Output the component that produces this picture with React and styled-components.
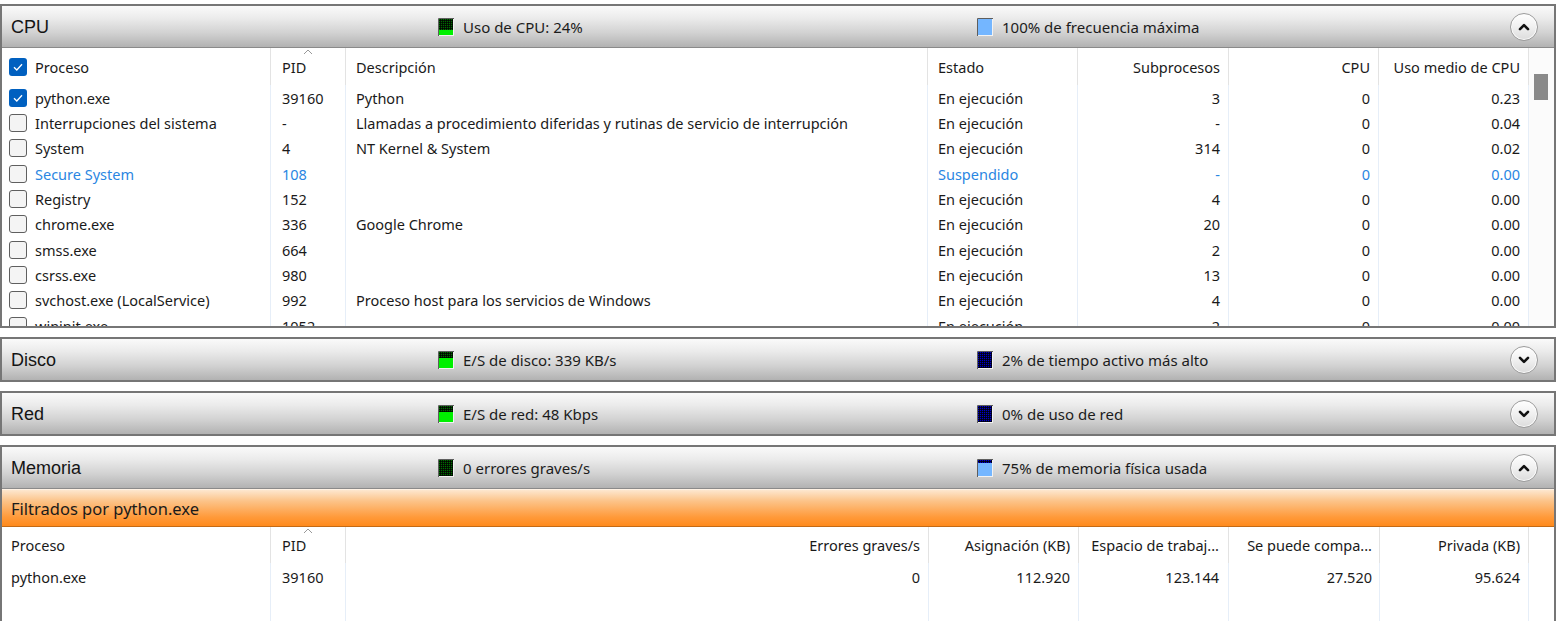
import React, { useId } from "react";
import styled, { createGlobalStyle } from "styled-components";

const GlobalStyle = createGlobalStyle`
  html, body {
    margin: 0;
    padding: 0;
    background: #fff;
    overflow: hidden;
  }
  body {
    font-family: "Noto Sans", "Open Sans", sans-serif;
    color: #1a1a1a;
  }
`;

// column layouts (px) - last one fills the rest (scrollbar / empty)
const CPU_COLS = [
  { key: "name", w: 269, pad: "0 0 0 7px" },
  { key: "pid", w: 75, pad: "0 0 0 11px", sort: true },
  { key: "desc", w: 582, pad: "0 0 0 10px" },
  { key: "state", w: 150, pad: "0 0 0 10px" },
  { key: "threads", w: 151, pad: "0 8px 0 0", right: true },
  { key: "cpu", w: 150, pad: "0 8px 0 0", right: true },
  { key: "avg", w: 150, pad: "0 8px 0 0", right: true },
];

const MEM_COLS = [
  { key: "name", w: 269, pad: "0 0 0 9px" },
  { key: "pid", w: 75, pad: "0 0 0 11px", sort: true },
  { key: "faults", w: 583, pad: "0 8px 0 0", right: true },
  { key: "commit", w: 150, pad: "0 8px 0 0", right: true },
  { key: "ws", w: 150, pad: "0 9px 0 0", right: true },
  { key: "share", w: 151, pad: "0 7px 0 0", right: true },
  { key: "priv", w: 149, pad: "0 8px 0 0", right: true },
];

const cpuHead = {
  name: "Proceso",
  pid: "PID",
  desc: "Descripción",
  state: "Estado",
  threads: "Subprocesos",
  cpu: "CPU",
  avg: "Uso medio de CPU",
};

const cpuRows = [
  { on: true, name: "python.exe", pid: "39160", desc: "Python", state: "En ejecución", threads: "3", cpu: "0", avg: "0.23" },
  { name: "Interrupciones del sistema", pid: "-", desc: "Llamadas a procedimiento diferidas y rutinas de servicio de interrupción", state: "En ejecución", threads: "-", cpu: "0", avg: "0.04" },
  { name: "System", pid: "4", desc: "NT Kernel & System", state: "En ejecución", threads: "314", cpu: "0", avg: "0.02" },
  { blue: true, name: "Secure System", pid: "108", desc: "", state: "Suspendido", threads: "-", cpu: "0", avg: "0.00" },
  { name: "Registry", pid: "152", desc: "", state: "En ejecución", threads: "4", cpu: "0", avg: "0.00" },
  { name: "chrome.exe", pid: "336", desc: "Google Chrome", state: "En ejecución", threads: "20", cpu: "0", avg: "0.00" },
  { name: "smss.exe", pid: "664", desc: "", state: "En ejecución", threads: "2", cpu: "0", avg: "0.00" },
  { name: "csrss.exe", pid: "980", desc: "", state: "En ejecución", threads: "13", cpu: "0", avg: "0.00" },
  { name: "svchost.exe (LocalService)", pid: "992", desc: "Proceso host para los servicios de Windows", state: "En ejecución", threads: "4", cpu: "0", avg: "0.00" },
  { name: "wininit.exe", pid: "1052", desc: "", state: "En ejecución", threads: "2", cpu: "0", avg: "0.00" },
];

const memHead = {
  name: "Proceso",
  pid: "PID",
  faults: "Errores graves/s",
  commit: "Asignación (KB)",
  ws: "Espacio de trabaj...",
  share: "Se puede compa...",
  priv: "Privada (KB)",
};

const memRows = [
  { name: "python.exe", pid: "39160", faults: "0", commit: "112.920", ws: "123.144", share: "27.520", priv: "95.624" },
];

const GREEN = { grid: "#006a00", fill: "#00f000" };
const BLUE = { grid: "#0000c8", fill: "#74b6ff" };

const sections = [
  {
    title: "CPU",
    open: true,
    stats: [
      { ...GREEN, level: 0.3, text: "Uso de CPU: 24%" },
      { ...BLUE, level: 1, text: "100% de frecuencia máxima" },
    ],
  },
  {
    title: "Disco",
    stats: [
      { ...GREEN, level: 0.6, text: "E/S de disco: 339 KB/s" },
      { ...BLUE, level: 0, text: "2% de tiempo activo más alto" },
    ],
  },
  {
    title: "Red",
    stats: [
      { ...GREEN, level: 0.65, text: "E/S de red: 48 Kbps" },
      { ...BLUE, level: 0, text: "0% de uso de red" },
    ],
  },
  {
    title: "Memoria",
    open: true,
    stats: [
      { ...GREEN, level: 0, text: "0 errores graves/s" },
      { ...BLUE, level: 0.8, text: "75% de memoria física usada" },
    ],
  },
];

const Meter = ({ grid, fill, level }) => {
  const id = "m" + useId().replace(/[^a-zA-Z0-9]/g, "");
  const fh = Math.round(16 * level);
  return (
    <svg width="16" height="18" viewBox="0 0 16 18">
      <defs>
        <pattern id={id} width="2" height="2" patternUnits="userSpaceOnUse">
          <rect width="2" height="2" fill={grid} />
          <rect width="2" height="1" fill="#000" opacity="0.75" />
          <rect width="1" height="2" fill="#000" opacity="0.75" />
        </pattern>
      </defs>
      <rect width="16" height="18" fill="#f2f2f2" />
      <path d="M0.5 18V0.5H16" stroke="#5e5e5e" fill="none" />
      <rect x="1" y="1" width="14" height="16" fill={`url(#${id})`} />
      {fh > 0 && <rect x="1" y={17 - fh} width="14" height={fh} fill={fill} />}
    </svg>
  );
};

const Toggle = ({ up }) => (
  <ToggleBtn type="button">
    <svg width="12" height="8" viewBox="0 0 12 8">
      <path
        d={up ? "M2 6.2 6 2.2 10 6.2" : "M2 1.8 6 5.8 10 1.8"}
        stroke="#111"
        strokeWidth="2.6"
        fill="none"
        strokeLinecap="round"
        strokeLinejoin="round"
      />
    </svg>
  </ToggleBtn>
);

const Check = ({ on }) => (
  <Box $on={on}>
    {on && (
      <svg width="12" height="10" viewBox="0 0 12 10">
        <path d="M2 5.2 4.8 8 10 2.2" stroke="#fff" strokeWidth="1.3" fill="none" />
      </svg>
    )}
  </Box>
);

const SortCaret = () => (
  <Caret width="10" height="6" viewBox="0 0 10 6">
    <path d="M1 5 5 1 9 5" stroke="#999" strokeWidth="1" fill="none" />
  </Caret>
);

const TableRows = ({ cols, head, rows, withCheck, headH, rowH }) => (
  <>
    <Row $cols={cols} $h={headH}>
      {cols.map((c) => (
        <Cell key={c.key} $pad={c.pad} $right={c.right} $head>
          {c.sort && <SortCaret />}
          {withCheck && c.key === "name" && <Check on />}
          <span>{head[c.key]}</span>
        </Cell>
      ))}
    </Row>
    {rows.map((r, i) => (
      <Row key={i} $cols={cols} $h={rowH} $blue={r.blue}>
        {cols.map((c) => (
          <Cell key={c.key} $pad={c.pad} $right={c.right}>
            {withCheck && c.key === "name" && <Check on={r.on} />}
            <span>{r[c.key]}</span>
          </Cell>
        ))}
      </Row>
    ))}
  </>
);

const App = () => {
  return (
    <Page>
      <GlobalStyle />
      {sections.map((s) => (
        <Section key={s.title}>
          <Header $open={s.open}>
            <Title>{s.title}</Title>
            {s.stats.map((st) => (
              <Stat key={st.text}>
                <Meter grid={st.grid} fill={st.fill} level={st.level} />
                <span>{st.text}</span>
              </Stat>
            ))}
            <Toggle up={s.open} />
          </Header>

          {s.title === "CPU" && (
            <TableArea $h={278}>
              <List>
                <TableRows cols={CPU_COLS} head={cpuHead} rows={cpuRows} withCheck headH={37} rowH={25.33} />
              </List>
              <ScrollTrack>
                <Thumb />
              </ScrollTrack>
            </TableArea>
          )}

          {s.title === "Memoria" && (
            <>
              <FilterBar>Filtrados por python.exe</FilterBar>
              <TableArea $h={100}>
                <List>
                  <TableRows cols={MEM_COLS} head={memHead} rows={memRows} headH={36} rowH={27} />
                  <Row $cols={MEM_COLS} $grow>
                    {MEM_COLS.map((c) => (
                      <Cell key={c.key} />
                    ))}
                  </Row>
                </List>
                <Gutter />
              </TableArea>
            </>
          )}
        </Section>
      ))}
    </Page>
  );
};

const Page = styled.div`
  display: flex;
  flex-direction: column;
  gap: 9px;
  padding: 4px 4px 0 0;
`;

const Section = styled.section`
  border: 2px solid #767676;
  background: #fff;
`;

const Header = styled.div`
  display: grid;
  grid-template-columns: 436px 539px 1fr auto;
  align-items: center;
  height: 41px;
  padding-right: 16px;
  background: linear-gradient(#fafafa 0%, #ebebeb 30%, #d2d2d2 65%, #b2b2b2 100%);
  border-bottom: ${(p) => (p.$open ? "1px solid #8a8a8a" : "none")};
`;

const Title = styled.div`
  padding-left: 9px;
  padding-top: 2px;
  font-family: "Liberation Sans", Arial, sans-serif;
  font-size: 18px;
  color: #141414;
`;

const Stat = styled.div`
  display: flex;
  align-items: center;
  gap: 9px;
  font-size: 15px;
  color: #1c1c1c;

  svg {
    flex: none;
  }
`;

const ToggleBtn = styled.button`
  width: 28px;
  height: 28px;
  padding: 0;
  border-radius: 50%;
  border: 1px solid #9c9c9c;
  background: linear-gradient(#ffffff 0%, #f0f0f0 50%, #dcdcdc 100%);
  box-shadow: inset 0 0 0 1px #fdfdfd;
  display: flex;
  align-items: center;
  justify-content: center;
`;

const TableArea = styled.div`
  display: grid;
  grid-template-columns: 1527px 1fr;
  height: ${(p) => p.$h}px;
  overflow: hidden;
  font-size: 14.5px;
`;

const List = styled.div`
  display: flex;
  flex-direction: column;
  min-height: 0;
  overflow: hidden;
`;

const Row = styled.div`
  display: grid;
  grid-template-columns: ${(p) => p.$cols.map((c) => c.w + "px").join(" ")};
  height: ${(p) => (p.$h ? p.$h + "px" : "auto")};
  flex: ${(p) => (p.$grow ? "1" : "none")};
  color: ${(p) => (p.$blue ? "#2a86e2" : "#1a1a1a")};
`;

const Cell = styled.div`
  position: relative;
  display: flex;
  align-items: center;
  justify-content: ${(p) => (p.$right ? "flex-end" : "flex-start")};
  gap: 8px;
  padding: ${(p) => p.$pad || "0"};
  border-right: 1px solid ${(p) => (p.$head ? "#e3e3e3" : "#e6eef8")};
  white-space: nowrap;
  overflow: hidden;
`;

const Caret = styled.svg`
  position: absolute;
  left: 32px;
  top: 1px;
`;

const Box = styled.span`
  flex: none;
  box-sizing: border-box;
  width: 18px;
  height: 18px;
  border-radius: 3px;
  display: inline-flex;
  align-items: center;
  justify-content: center;
  background: ${(p) => (p.$on ? "#0060c0" : "#f4f4f4")};
  border: ${(p) => (p.$on ? "none" : "1px solid #5f5f5f")};
`;

const ScrollTrack = styled.div`
  display: flex;
  justify-content: center;
  padding: 26px 1px 0 0;
  background: #fbfbfb;
`;

const Thumb = styled.div`
  width: 14px;
  height: 26px;
  background: #8a8a8a;
`;

const Gutter = styled.div`
  background: #fff;
`;

const FilterBar = styled.div`
  height: 38px;
  box-sizing: border-box;
  display: flex;
  align-items: center;
  padding-left: 9px;
  font-size: 16.5px;
  color: #1a1a1a;
  background: linear-gradient(#fde7cf 0%, #fcc48a 30%, #ff9a3a 75%, #ff8a1c 100%);
  border-top: 1px solid #fff2e4;
  border-bottom: 1px solid #c46a14;
`;

export default App;
